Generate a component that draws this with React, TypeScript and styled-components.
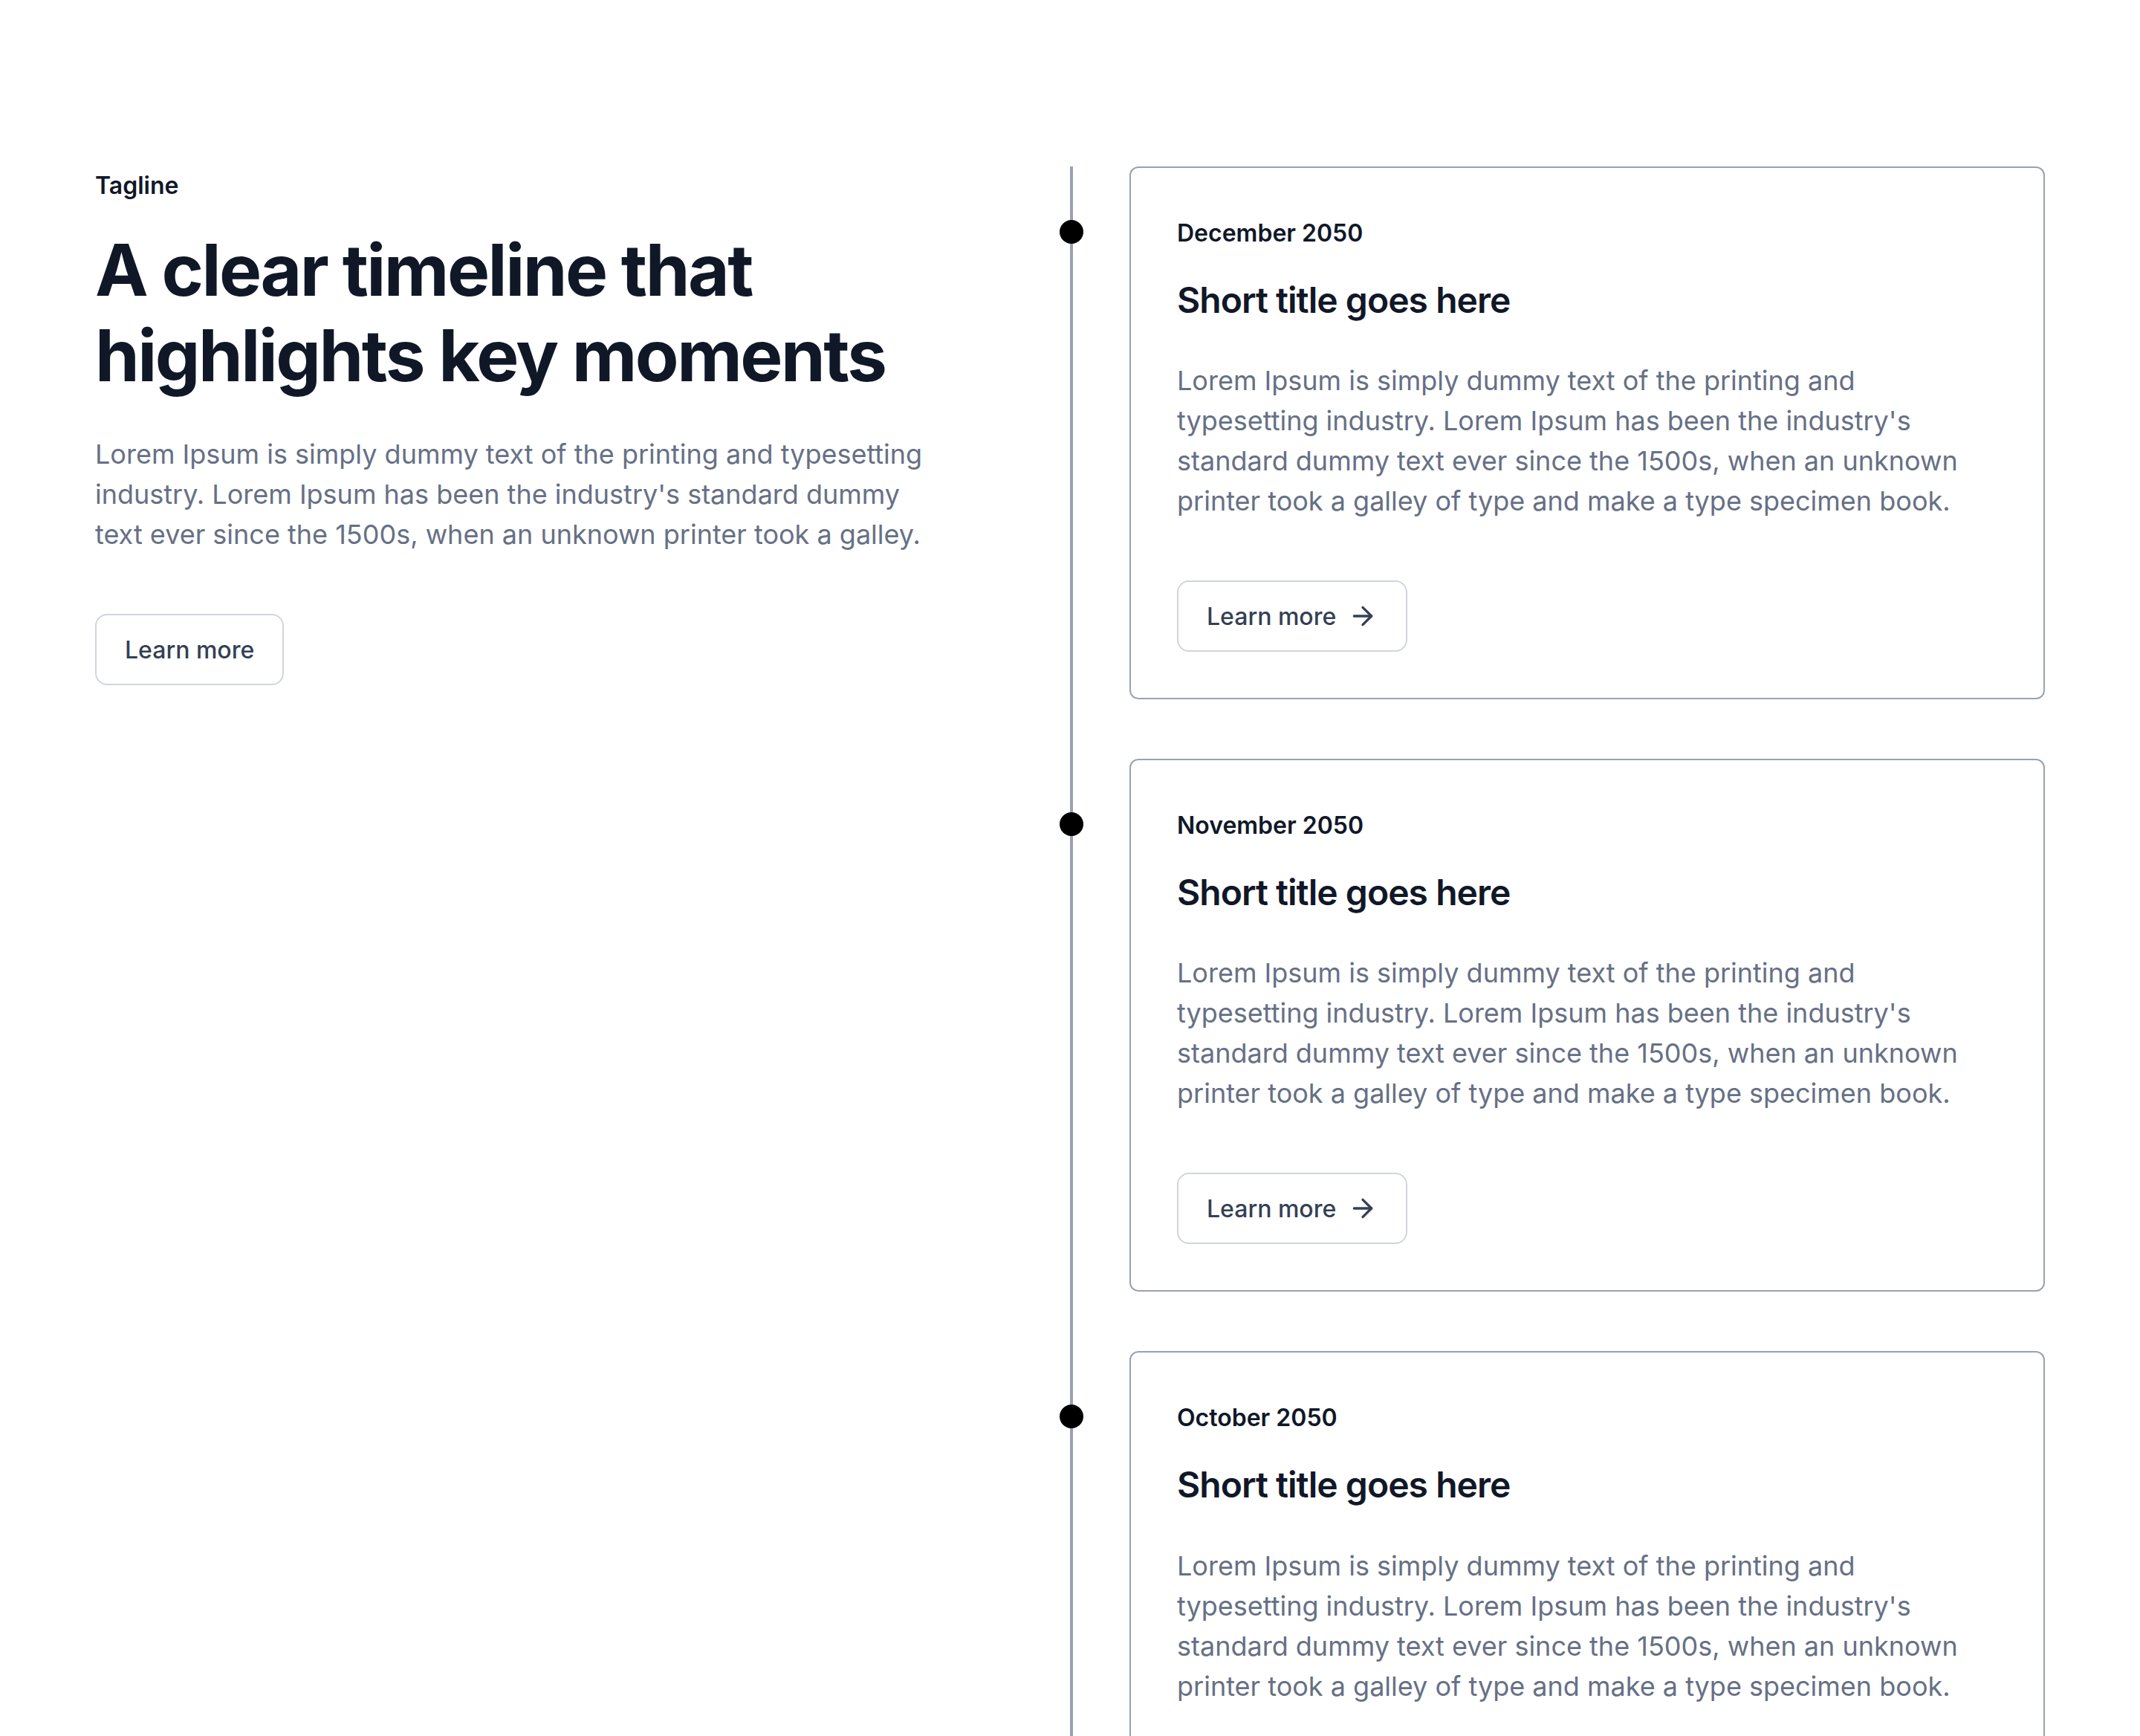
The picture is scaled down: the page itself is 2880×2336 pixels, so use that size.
import React from "react";
import styled, { createGlobalStyle } from "styled-components";
import { ArrowRight } from "lucide-react";

const GlobalStyle = createGlobalStyle`
  body {
    margin: 0;
    background: #ffffff;
    font-family: Inter, "Noto Sans", "Liberation Sans", sans-serif;
    -webkit-font-smoothing: antialiased;
  }
  * {
    box-sizing: border-box;
  }
`

const Section = styled.section`
  display: grid;
  grid-template-columns: minmax(0, 1fr) 1312px;
  column-gap: 80px;
  padding: 224px 128px;
  align-items: start;
`

const Intro = styled.div`
  display: flex;
  flex-direction: column;
  align-items: flex-start;
  max-width: 1136px;
  padding-top: 2px;
`

const Tagline = styled.span`
  font-size: 32px;
  line-height: 48px;
  font-weight: 600;
  color: #101828;
`

const Heading = styled.h1`
  margin: 32px 0 0;
  font-size: 96px;
  line-height: 1.2;
  font-weight: 700;
  letter-spacing: -0.026em;
  color: #101828;
`

const Text = styled.p<{ $gap: number }>`
  margin: ${(p) => p.$gap}px 0 0;
  font-size: 36px;
  line-height: 54px;
  font-weight: 400;
  color: #667085;
`

const Button = styled.button<{ $gap: number }>`
  margin-top: ${(p) => p.$gap}px;
  display: inline-flex;
  align-items: center;
  gap: 16px;
  height: 96px;
  padding: 0 38px;
  background: #ffffff;
  border: 2px solid #d0d5dd;
  border-radius: 16px;
  font-family: inherit;
  font-size: 32px;
  font-weight: 500;
  color: #344054;
  cursor: pointer;
`

const Timeline = styled.div`
  display: flex;
  flex-direction: column;
  gap: 80px;
  border-left: 4px solid #98a2b3;
  padding-left: 76px;
`

const Card = styled.article`
  position: relative;
  display: flex;
  flex-direction: column;
  align-items: flex-start;
  border: 2px solid #98a2b3;
  border-radius: 12px;
  padding: 64px 62px 62px;
`

// dot sits over the rail, lined up with the date
const Dot = styled.span`
  position: absolute;
  left: -96px;
  top: 70px;
  width: 32px;
  height: 32px;
  border-radius: 50%;
  background: #000000;
`

const Date = styled.span`
  font-size: 32px;
  line-height: 48px;
  font-weight: 600;
  color: #101828;
`

const Title = styled.h3`
  margin: 32px 0 0;
  font-size: 48px;
  line-height: 1.4;
  font-weight: 600;
  letter-spacing: -0.02em;
  color: #101828;
`

const body =
  "Lorem Ipsum is simply dummy text of the printing and typesetting industry. Lorem Ipsum has been the industry's standard dummy text ever since the 1500s, when an unknown printer took a galley of type and make a type specimen book."

const events = ["December 2050", "November 2050", "October 2050"]

const App = () => {
  return (
    <>
      <GlobalStyle />
      <Section>
        <Intro>
          <Tagline>Tagline</Tagline>
          <Heading>
            A clear timeline that
            <br />
            highlights key moments
          </Heading>
          <Text $gap={48}>
            Lorem Ipsum is simply dummy text of the printing and typesetting industry. Lorem
            Ipsum has been the industry's standard dummy text ever since the 1500s, when an
            unknown printer took a galley.
          </Text>
          <Button $gap={80}>Learn more</Button>
        </Intro>

        <Timeline>
          {events.map((date) => (
            <Card key={date}>
              <Dot />
              <Date>{date}</Date>
              <Title>Short title goes here</Title>
              <Text $gap={48}>{body}</Text>
              <Button $gap={80}>
                Learn more
                <ArrowRight size={40} strokeWidth={2} />
              </Button>
            </Card>
          ))}
        </Timeline>
      </Section>
    </>
  )
}

export default App;
